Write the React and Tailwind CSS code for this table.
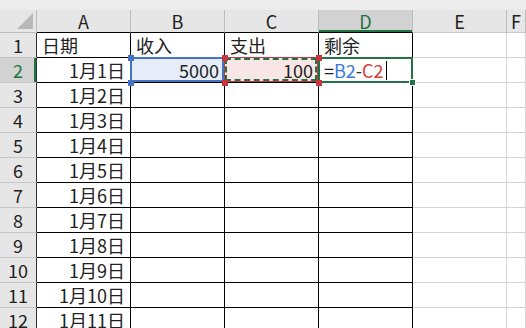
import { Fragment } from "react";

const cols = ["A", "B", "C", "D", "E", "F"];
const rows = Array.from({ length: 12 }, (_, i) => i + 1);

const values = {
  1: { A: "日期", B: "收入", C: "支出", D: "剩余" },
  2: { A: "1月1日", B: "5000", C: "100" },
};
for (let r = 3; r <= 12; r++) values[r] = { A: `1月${r - 1}日` };

const Corner = () => (
  <div className="relative border-r border-b border-r-[#bcbcbc] border-b-[#bcbcbc] bg-[#e6e6e6]">
    <svg className="absolute left-[17px] top-[3px]" width="16" height="16" viewBox="0 0 16 16">
      <polygon points="16,0 16,16 0,16" fill="#b9b9b9" />
    </svg>
  </div>
);

const ColHeader = ({ name }) => {
  const inTable = ["A", "B", "C", "D"].includes(name);
  if (name === "D") {
    return (
      <div className="flex items-center justify-center border-r border-b border-r-[#bcbcbc] border-b-black bg-[#d2d2d2] text-[#217346] shadow-[inset_0_-2px_0_#217346]">
        D
      </div>
    );
  }
  return (
    <div
      className={
        "flex items-center justify-center border-r border-b border-r-[#bcbcbc] bg-[#e6e6e6] " +
        (inTable ? "border-b-black" : "border-b-[#c8c8c8]")
      }
    >
      {name}
    </div>
  );
};

const RowHeader = ({ r }) =>
  r === 2 ? (
    <div className="flex items-center justify-center border-r border-b border-r-[#333] border-b-[#c6c6c6] bg-[#d2d2d2] text-[#217346] shadow-[inset_-2px_0_0_#217346]">
      {r}
    </div>
  ) : (
    <div className="flex items-center justify-center border-r border-b border-r-[#333] border-b-[#c6c6c6] bg-[#e6e6e6]">
      {r}
    </div>
  );

const Square = ({ className }) => <span className={"absolute size-[6px] " + className} />;

const Cell = ({ r, c }) => {
  const inTable = ["A", "B", "C", "D"].includes(c);
  const text = values[r]?.[c] ?? "";
  const right = r > 1 && (c === "A" || c === "B" || c === "C");
  const base =
    "flex items-center border-r border-b px-[5px] " +
    (inTable ? "border-black " : "border-[#d4d4d4] ") +
    (right ? "justify-end " : "justify-start ");

  if (r === 2 && c === "B") {
    return (
      <div className={base + "relative bg-[#e6edf8]"}>
        {text}
        <div className="pointer-events-none absolute -left-px -top-px right-0 bottom-0 border-2 border-[#4472c4]" />
        <Square className="left-[-3px] top-[-3px] bg-[#4472c4]" />
        <Square className="left-[-3px] top-[22px] bg-[#4472c4]" />
      </div>
    );
  }

  if (r === 2 && c === "C") {
    return (
      <div className={base + "relative bg-[#f8e6e6]"}>
        {text}
        <div className="pointer-events-none absolute -left-px -top-px right-0 bottom-0 z-20 border border-[#c8363d]" />
        <div className="pointer-events-none absolute left-0 top-0 right-px bottom-px z-20 border-2 border-dashed border-[#217346]" />
        <Square className="z-20 left-[-3px] top-[-3px] bg-[#c8363d]" />
        <Square className="z-20 left-[91px] top-[-3px] bg-[#c8363d]" />
        <Square className="z-20 left-[-3px] top-[22px] bg-[#c8363d]" />
        <Square className="z-20 left-[91px] top-[22px] bg-[#c8363d]" />
      </div>
    );
  }

  if (r === 2 && c === "D") {
    return (
      <div className={base + "relative"}>
        <span>=</span>
        <span className="text-[#3b78d8]">B2</span>
        <span className="text-[#333]">-</span>
        <span className="text-[#d33b3b]">C2</span>
        <span className="ml-[2px] h-[19px] w-px bg-black" />
        <div className="pointer-events-none absolute -left-px -top-px -right-px -bottom-px z-10 border-2 border-[#217346]" />
        <span className="absolute left-[90px] top-[21px] z-10 size-[7px] border border-white bg-[#217346]" />
      </div>
    );
  }

  return <div className={base}>{text}</div>;
};

export default function App() {
  return (
    <div className="h-[328px] w-[526px] overflow-hidden bg-white font-['Noto_Sans_CJK_SC',sans-serif] text-[18px] leading-none text-[#222]">
      <div className="h-[10px] bg-[#ececec]" />
      <div className="grid grid-cols-[37px_94px_94px_94px_94px_94px_19px] grid-rows-[23px_repeat(12,25px)]">
        <Corner />
        {cols.map((c) => (
          <ColHeader key={c} name={c} />
        ))}
        {rows.map((r) => (
          <Fragment key={r}>
            <RowHeader r={r} />
            {cols.map((c) => (
              <Cell key={c} r={r} c={c} />
            ))}
          </Fragment>
        ))}
      </div>
    </div>
  );
}
